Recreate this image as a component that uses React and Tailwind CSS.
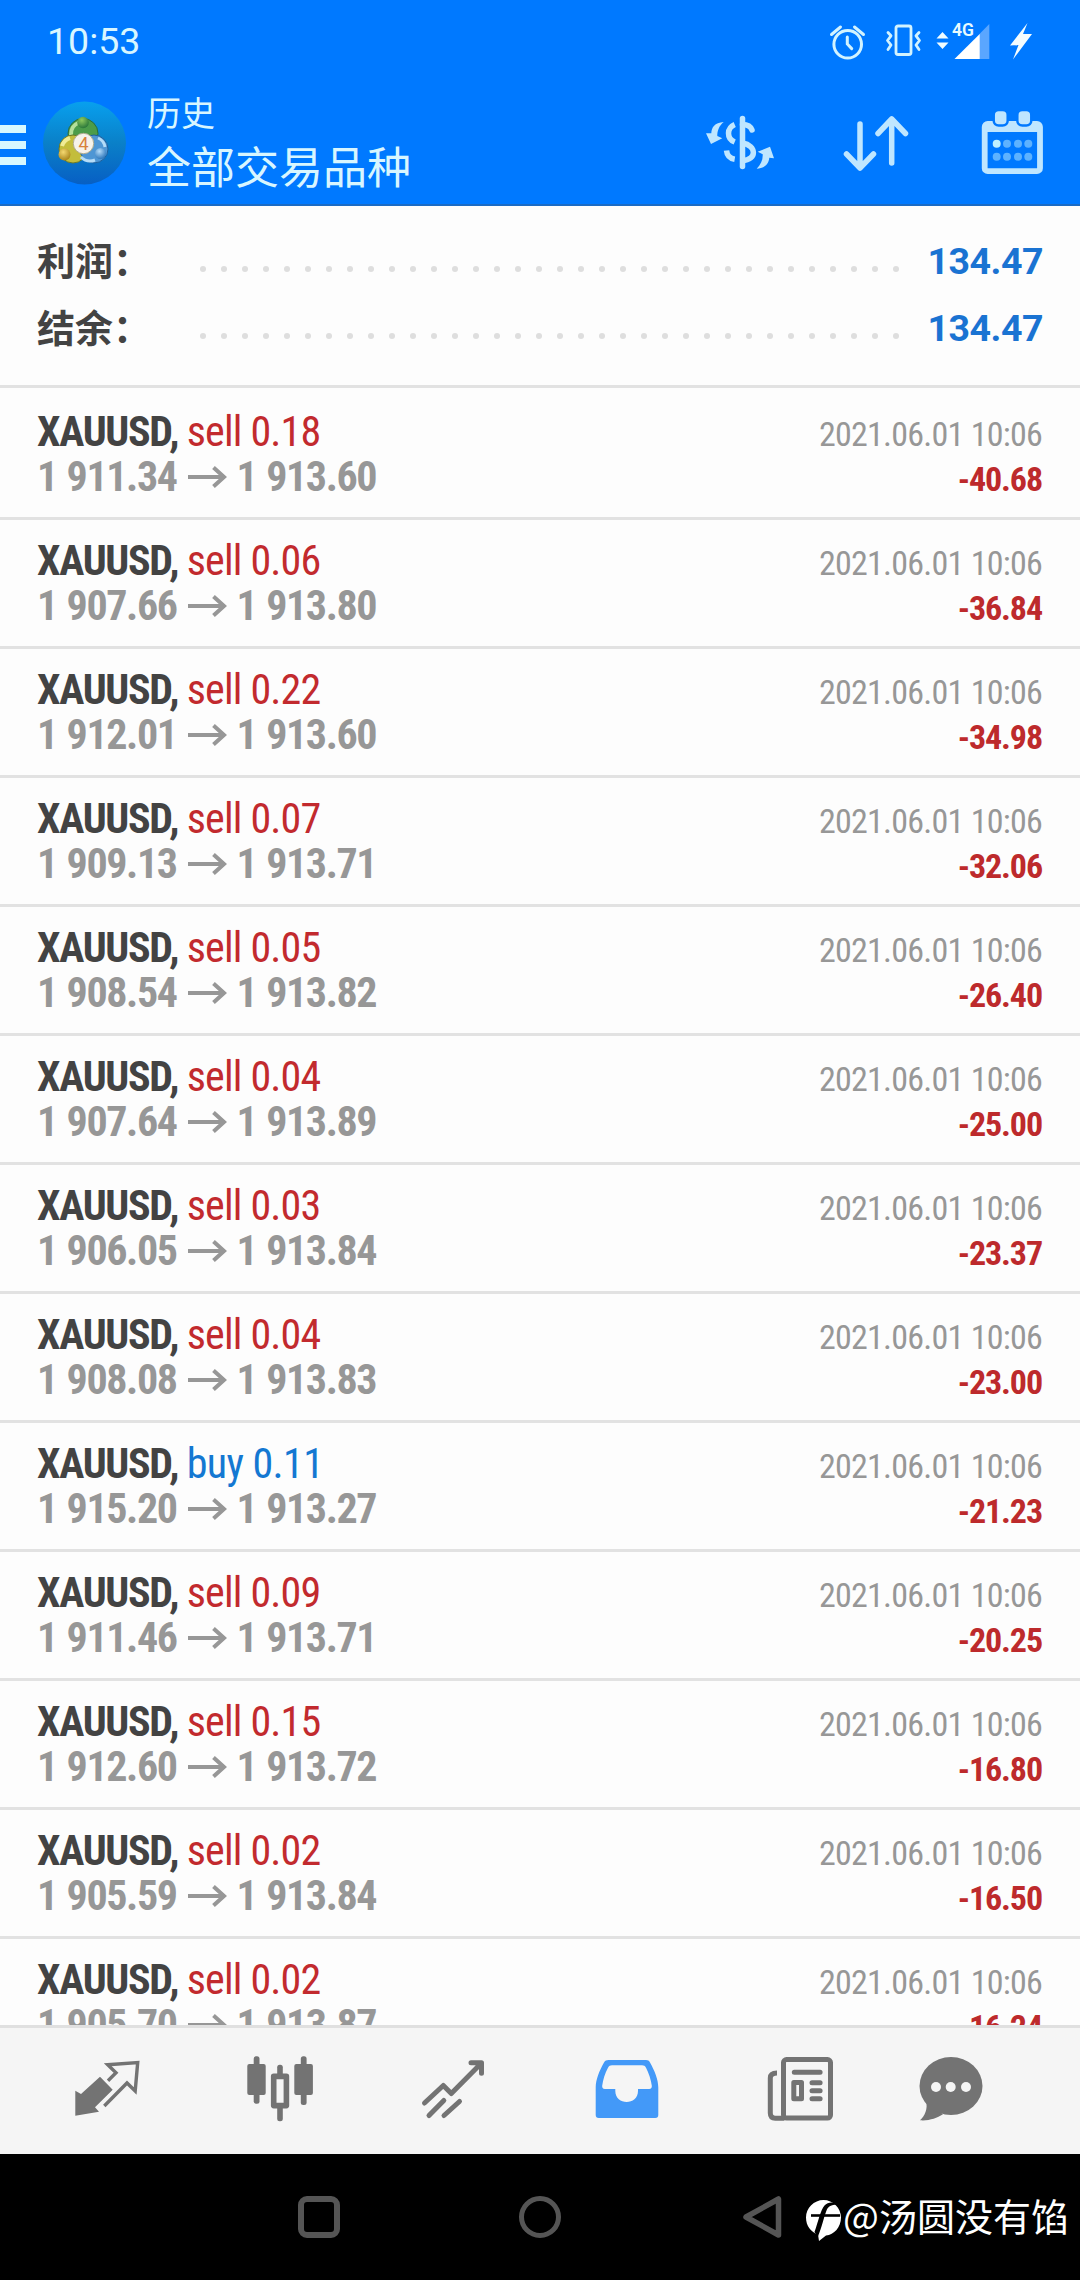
const TRADES = [
  { type: 'sell', volume: '0.18', open: '1 911.34', close: '1 913.60', profit: '-40.68' },
  { type: 'sell', volume: '0.06', open: '1 907.66', close: '1 913.80', profit: '-36.84' },
  { type: 'sell', volume: '0.22', open: '1 912.01', close: '1 913.60', profit: '-34.98' },
  { type: 'sell', volume: '0.07', open: '1 909.13', close: '1 913.71', profit: '-32.06' },
  { type: 'sell', volume: '0.05', open: '1 908.54', close: '1 913.82', profit: '-26.40' },
  { type: 'sell', volume: '0.04', open: '1 907.64', close: '1 913.89', profit: '-25.00' },
  { type: 'sell', volume: '0.03', open: '1 906.05', close: '1 913.84', profit: '-23.37' },
  { type: 'sell', volume: '0.04', open: '1 908.08', close: '1 913.83', profit: '-23.00' },
  { type: 'buy',  volume: '0.11', open: '1 915.20', close: '1 913.27', profit: '-21.23' },
  { type: 'sell', volume: '0.09', open: '1 911.46', close: '1 913.71', profit: '-20.25' },
  { type: 'sell', volume: '0.15', open: '1 912.60', close: '1 913.72', profit: '-16.80' },
  { type: 'sell', volume: '0.02', open: '1 905.59', close: '1 913.84', profit: '-16.50' },
  { type: 'sell', volume: '0.02', open: '1 905.70', close: '1 913.87', profit: '-16.24' },
];

const SUMMARY = [
  { label: '利润：', value: '134.47' },
  { label: '结余：', value: '134.47' },
];

/* ── Status bar icons ───────────────────────── */

function AlarmIcon() {
  return (
    <svg width="40" height="40" fill="none" stroke="#d2f3ff" strokeWidth="3" strokeLinecap="round">
      <circle cx="19.7" cy="23.3" r="13.8" />
      <path d="M3.5 13.5 12.5 6M26.5 6l9 7.5M19.3 16v7l4.4 4.6" />
    </svg>
  );
}

function VibrateIcon() {
  return (
    <svg width="38" height="38" fill="none" stroke="#d2f3ff" strokeWidth="2.8" strokeLinecap="round" strokeLinejoin="round">
      <rect x="12" y="4" width="15" height="28.5" rx="2" />
      <path d="M4 10.5l3 3.3-3.5 4.7L7 23l-3 4.5M35 10.5l-3 3.3 3.5 4.7L32 23l3 4.5" />
    </svg>
  );
}

function SignalIcon() {
  return (
    <svg width="54" height="38">
      <path d="M6.5 10 12.5 16.5H.5zM6.5 27 12.5 20.5H.5z" fill="#f0fcff" />
      <path d="M43 12.5 53.3 2v35H43z" fill="#5aa6ff" />
      <path d="M18.5 37 43.7 12v25z" fill="#fff" />
      <text x="16" y="13.5" fontSize="17.5" fontWeight="600" fill="#e8fbff" fontFamily="Roboto, sans-serif">4G</text>
    </svg>
  );
}

function BoltIcon() {
  return (
    <svg width="24" height="38" fill="#f4fdff">
      <path d="M18.5 1 1 23.5l8.5-.5L4 37.5 23 12h-9z" />
    </svg>
  );
}

/* ── Header icons ───────────────────────────── */

function LogoIcon() {
  return (
    <svg width="86" height="86">
      <defs>
        <linearGradient id="logo-bg" x1="0" y1="0" x2="0" y2="1">
          <stop offset="0" stopColor="#08a0ee" />
          <stop offset="0.5" stopColor="#0a80c8" />
          <stop offset="1" stopColor="#075fc4" />
        </linearGradient>
        <radialGradient id="logo-green" cx="0.4" cy="0.3" r="0.8">
          <stop offset="0" stopColor="#8fca5e" />
          <stop offset="1" stopColor="#1c6b35" />
        </radialGradient>
        <radialGradient id="logo-yellow" cx="0.4" cy="0.3" r="0.8">
          <stop offset="0" stopColor="#f4d870" />
          <stop offset="1" stopColor="#a07a10" />
        </radialGradient>
        <radialGradient id="logo-blue" cx="0.4" cy="0.3" r="0.8">
          <stop offset="0" stopColor="#b4dcfa" />
          <stop offset="1" stopColor="#1d6bb4" />
        </radialGradient>
      </defs>
      <circle cx="43.5" cy="43" r="41.5" fill="url(#logo-bg)" />
      <circle cx="42" cy="33.5" r="15" fill="#4c9c4a" stroke="#2b6d3a" />
      <path d="M30 35a12.5 12.5 0 0 1 8-12.5" fill="none" stroke="#b4e09a" strokeWidth="4" />
      <circle cx="32" cy="49" r="14" fill="#c3bd3c" stroke="#6b7a28" />
      <path d="M21 46a12 12 0 0 1 8-8" fill="none" stroke="#f0ec96" strokeWidth="4" />
      <circle cx="53" cy="49" r="14" fill="#4e96d4" stroke="#20609c" />
      <path d="M57 38a12 12 0 0 1 7 9M40 57a13 13 0 0 0 14 3" fill="none" stroke="#b4dcf8" strokeWidth="3" />
      <circle cx="42" cy="22.5" r="5.8" fill="url(#logo-green)" />
      <circle cx="23.5" cy="54.5" r="6" fill="url(#logo-yellow)" />
      <circle cx="59.5" cy="53.5" r="5.5" fill="url(#logo-blue)" />
      <circle cx="42.5" cy="43.5" r="10.2" fill="#f6f2ea" stroke="#b0ac90" />
      <text x="42.5" y="50" textAnchor="middle" fontSize="18" fill="#d8823c" fontFamily="Roboto, sans-serif">4</text>
    </svg>
  );
}

function CurrencyIcon() {
  return (
    <svg width="72" height="60" fill="#bfe6ff">
      <path d="M19.7 9C10.5 9.5 7.5 14.5 7.3 20.3L2 20.3 7 31l11.3-5.7-5-2.3c0-5 1.5-10 6.4-14z" />
      <path d="M52.7 55.7c8.500-.5 12-5 12.600-11l4.700.6-4-11.600-12.300 5 5 2.600c.3 6-2 10.500-6 14.400z" />
      <g fill="none" stroke="#bfe6ff" strokeWidth="5.5">
        <path d="M30.7 11.5c-8 3.5-8.5 14 0 17.500M22.500 37.5c.5 5 3.500 8 8.200 8.800" />
        <path d="M38.5 5.5v48" strokeLinecap="round" />
        <path d="M38.5 11.5c5 0 8 1.500 9.500 5.500" strokeLinecap="round" />
        <path d="M38.5 30c14.500 2.500 14.500 17 0 17.500" />
      </g>
    </svg>
  );
}

function SortIcon() {
  return (
    <svg width="68" height="60" fill="none" stroke="#bfe6ff" strokeWidth="5.5" strokeLinecap="round" strokeLinejoin="round">
      <path d="M18 11v44M4.500 41 18 55l13.500-14M49.700 50V6M36 20.500 49.700 6 63.500 20.500" />
    </svg>
  );
}

function CalendarIcon() {
  const cols = [16.7, 27, 38, 48.3];
  return (
    <svg width="66" height="68">
      <rect x="4.7" y="15" width="55.3" height="47.2" rx="3" fill="none" stroke="#bfe6ff" strokeWidth="5.8" />
      <rect x="4.7" y="14" width="55.3" height="9" fill="#bfe6ff" />
      <rect x="13.7" y="1" width="14" height="15.5" rx="5" fill="#bfe6ff" stroke="#0079ff" strokeWidth="2.5" />
      <rect x="37.3" y="1" width="14" height="15.5" rx="5" fill="#bfe6ff" stroke="#0079ff" strokeWidth="2.5" />
      {cols.map((x, i) => (
        <g key={x} fill="#5db2ff">
          <circle cx={x} cy="34.7" r="4" fill={i === 0 ? '#bff0ff' : '#5db2ff'} />
          <circle cx={x} cy="47.7" r="4" />
        </g>
      ))}
    </svg>
  );
}

/* ── Tab bar icons ──────────────────────────── */

function QuotesIcon() {
  return (
    <svg width="66" height="58">
      <path d="M1.300 30.700v25L25 51.800l-4-4.500 17.700-17.600L26 16.700 7 34z" fill="#737373" />
      <path d="M34 20.700l8-8-8.300-8 30-2.200-2.500 28.500-8.200-8L30.300 46" fill="none" stroke="#737373" strokeWidth="3.400" />
    </svg>
  );
}

function CandlesIcon() {
  return (
    <svg width="70" height="68" fill="#737373">
      <rect x="8.7" y="1.3" width="5.8" height="47.5" rx="2.5" />
      <rect x="2.3" y="9" width="18.4" height="31" rx="2" />
      <rect x="55.8" y="1.3" width="5.8" height="48.7" rx="2.5" />
      <rect x="49.3" y="9" width="18.6" height="31" rx="2" />
      <rect x="32.2" y="9.7" width="5.6" height="13" rx="2.5" />
      <rect x="32.2" y="50" width="5.6" height="16.3" rx="2.5" />
      <rect x="28.7" y="21.4" width="12.7" height="29.2" fill="none" stroke="#737373" strokeWidth="5.6" strokeLinejoin="round" />
    </svg>
  );
}

function TrendIcon() {
  return (
    <svg width="68" height="62" fill="none" stroke="#737373" strokeWidth="5" strokeLinecap="round" strokeLinejoin="round">
      <path d="M4.5 45 23.300 27.500l8 8L61 5.500M51 4.700h10.500v10.500M9 57.500l14.800-15M24 57.500l15.500-14" />
    </svg>
  );
}

function InboxIcon() {
  return (
    <svg width="68" height="62" fill="#4399f8">
      <path
        fillRule="evenodd"
        d="M15.5 2h37.5c2 0 3 .7 4 2.500 4.500 8 8.300 17 8.300 25V57c0 2-1 3-3 3H5.700c-2 0-3-1-3-3V29.500c0-8 3.800-17 8.300-25C12 2.700 13.500 2 15.500 2zM19 7.300c-2 0-3 .7-4 2.500-3 5.500-5 12-5.800 18-.2 2 .6 3.200 2.600 3.200h10.500v2c0 14.700 22.700 14.700 22.700 0v-2h11.200c2 0 2.800-1.200 2.600-3.200-.8-6-3-12.500-5.800-18-1-1.800-2-2.500-4-2.500z"
      />
    </svg>
  );
}

function NewsIcon() {
  return (
    <svg width="70" height="68" fill="none" stroke="#737373" strokeWidth="5" strokeLinecap="round">
      <rect x="17.5" y="4.6" width="47" height="58.5" rx="3" />
      <path d="M11 18c-4.500 0-6.700 1.500-6.700 5v35c0 3.500 1.500 5.200 5 5.200h9" strokeLinecap="butt" />
      <path d="M28.300 17.200h25.800M46 27.700h8.100M46 35.700h8.100M46 43.700h8.100" />
      <rect x="27.8" y="27.5" width="7.700" height="16.300" strokeLinejoin="round" />
    </svg>
  );
}

function ChatIcon() {
  return (
    <svg width="66" height="68">
      <path d="M8 46c2 8-1 14.500-6 19.300 9 .7 16.500-2 23-6z" fill="#737373" />
      <ellipse cx="33" cy="31" rx="31.5" ry="29" fill="#737373" />
      <g fill="#f5f5f5">
        <circle cx="18" cy="32" r="5" />
        <circle cx="32.7" cy="32" r="5" />
        <circle cx="48" cy="32" r="5" />
      </g>
    </svg>
  );
}

function WatermarkIcon() {
  return (
    <svg width="36" height="42">
      <path d="M17.500 0C27 0 35 8 35 17.500S28 35 20 35.500L13 41l-1-6.500C5 32 0 26 0 17.500 0 8 8 0 17.500 0z" fill="#fff" />
      <path d="M35 5C28 1.500 22 1.500 18.500 5.500c-4 4.500-6 15.500-10 26.500l3.200 5c4-9 6-19.500 9-27C22.500 5.500 27 4 35 5z" fill="#000" />
      <path d="M5 15.500h29" stroke="#000" strokeWidth="2.600" />
    </svg>
  );
}

function PriceArrow() {
  return (
    <svg className="ml-[11px] mr-[10px]" width="39" height="24" fill="none" stroke="#979797" strokeWidth="4">
      <path d="M0 12h36M25.500 2.500 36 12 25.500 21.500" />
    </svg>
  );
}

function TradeRow({ trade }) {
  return (
    <div className="flex h-[129px] shrink-0 justify-between border-b-[3px] border-[#e2e2e2] pr-[38px] pl-[37px] pt-[18px]">
      <div>
        <p className="h-[45px] text-[42px] leading-[45px] whitespace-pre">
          <span className="font-bold tracking-[-1.3px] text-[#434343]">XAUUSD, </span>
          <span className={trade.type === 'buy' ? 'tracking-[-0.6px] text-[#1478d2]' : 'tracking-[-0.8px] text-[#c22a2e]'}>
            {trade.type} {trade.volume}
          </span>
        </p>
        <p className="flex h-[45px] items-center text-[42px] leading-[45px] font-bold tracking-[-1.4px] [word-spacing:1.5px] text-[#979797]">
          {trade.open}
          <PriceArrow />
          {trade.close}
        </p>
      </div>
      <div className="pt-[3px] text-right text-[34px]">
        <p className="h-[45px] leading-[45px] tracking-[-0.75px] text-[#979797]">2021.06.01 10:06</p>
        <p className="h-[45px] leading-[45px] font-bold tracking-[-1.1px] text-[#bd2a2c]">{trade.profit}</p>
      </div>
    </div>
  );
}

export default function App() {
  return (
    <div className="flex h-[2280px] w-[1080px] flex-col overflow-hidden bg-[#fdfdfd] font-['Roboto_Condensed','Noto_Sans_CJK_SC',sans-serif]">

      {/* ── HEADER ───────────────────────────────── */}
      <header className="h-[206px] shrink-0 border-b-2 border-[#1b6bc4] bg-[#0079ff]">
        <div className="flex h-[82px] items-center pr-[47px] pl-[47px]">
          <span className="grow font-[Roboto] text-[37.5px] text-[#d8f6ff]">10:53</span>
          <div className="flex items-center">
            <AlarmIcon />
            <div className="ml-4"><VibrateIcon /></div>
            <div className="ml-[14px]"><SignalIcon /></div>
            <div className="ml-[19px]"><BoltIcon /></div>
          </div>
        </div>
        <div className="flex h-[122px] items-center pr-[34px]">
          <div className="flex w-[26px] flex-col gap-2 pt-[3px]">
            <span className="h-2 bg-[#d8f8ff]" />
            <span className="h-2 bg-[#d8f8ff]" />
            <span className="h-2 bg-[#d8f8ff]" />
          </div>
          <div className="ml-[15px]"><LogoIcon /></div>
          <div className="ml-5 grow pb-[7px] font-['Noto_Sans_CJK_SC',sans-serif] font-normal text-[#d8f6ff]">
            <p className="text-[34px] leading-[50px]">历史</p>
            <p className="text-[44px] leading-[56px]">全部交易品种</p>
          </div>
          <CurrencyIcon />
          <div className="ml-[66px]"><SortIcon /></div>
          <div className="ml-[70px]"><CalendarIcon /></div>
        </div>
      </header>

      {/* ── SUMMARY ──────────────────────────────── */}
      <section className="h-[182px] shrink-0 border-b-[3px] border-[#e2e2e2] px-[37px] pt-[21px]">
        {SUMMARY.map((item) => (
          <div key={item.label} className="flex h-[67px] items-center">
            <span className="w-[163px] pb-[4px] font-['Noto_Sans_CJK_SC',sans-serif] text-[38px] font-bold text-[#434343]">{item.label}</span>
            <div className="flex w-[699px] justify-between pt-[17px]">
              {Array.from({ length: 34 }, (_, i) => (
                <span key={i} className="size-1.5 rounded-full bg-[#dedede]" />
              ))}
            </div>
            <span className="grow pt-[2px] text-right font-[Roboto] text-[37.5px] font-bold tracking-[-0.5px] text-[#1a73d2]">{item.value}</span>
          </div>
        ))}
      </section>

      {/* ── TRADES ───────────────────────────────── */}
      <main className="flex min-h-0 grow flex-col overflow-hidden pt-[3px]">
        {TRADES.map((trade, i) => <TradeRow key={i} trade={trade} />)}
      </main>

      {/* ── TAB BAR ──────────────────────────────── */}
      <nav className="flex h-[129px] shrink-0 items-center border-t-[3px] border-[#e0e0e0] bg-[#f5f5f5] pb-[4px] pl-[74px]">
        <div className="flex items-center gap-[105px]">
          <QuotesIcon />
          <CandlesIcon />
          <TrendIcon />
          <InboxIcon />
          <NewsIcon />
        </div>
        <div className="ml-[82px]"><ChatIcon /></div>
      </nav>

      {/* ── SYSTEM NAVIGATION ────────────────────── */}
      <footer className="flex h-[126px] shrink-0 items-center bg-black pl-[298px]">
        <span className="size-[42px] rounded-[9px] border-[6px] border-[#555]" />
        <span className="ml-[179px] size-[42px] rounded-full border-[5px] border-[#555]" />
        <svg className="ml-[181px]" width="42" height="44" fill="none" stroke="#555" strokeWidth="5.5" strokeLinejoin="round">
          <path d="M36.500 4v36L4 22z" />
        </svg>
        <div className="ml-[22px] flex items-center">
          <div className="pt-[8px]"><WatermarkIcon /></div>
          <span className="ml-[1px] pb-[4px] font-['Noto_Sans_CJK_SC',sans-serif] text-[38px] leading-[44px] whitespace-nowrap text-white">@汤圆没有馅</span>
        </div>
      </footer>
    </div>
  );
}
